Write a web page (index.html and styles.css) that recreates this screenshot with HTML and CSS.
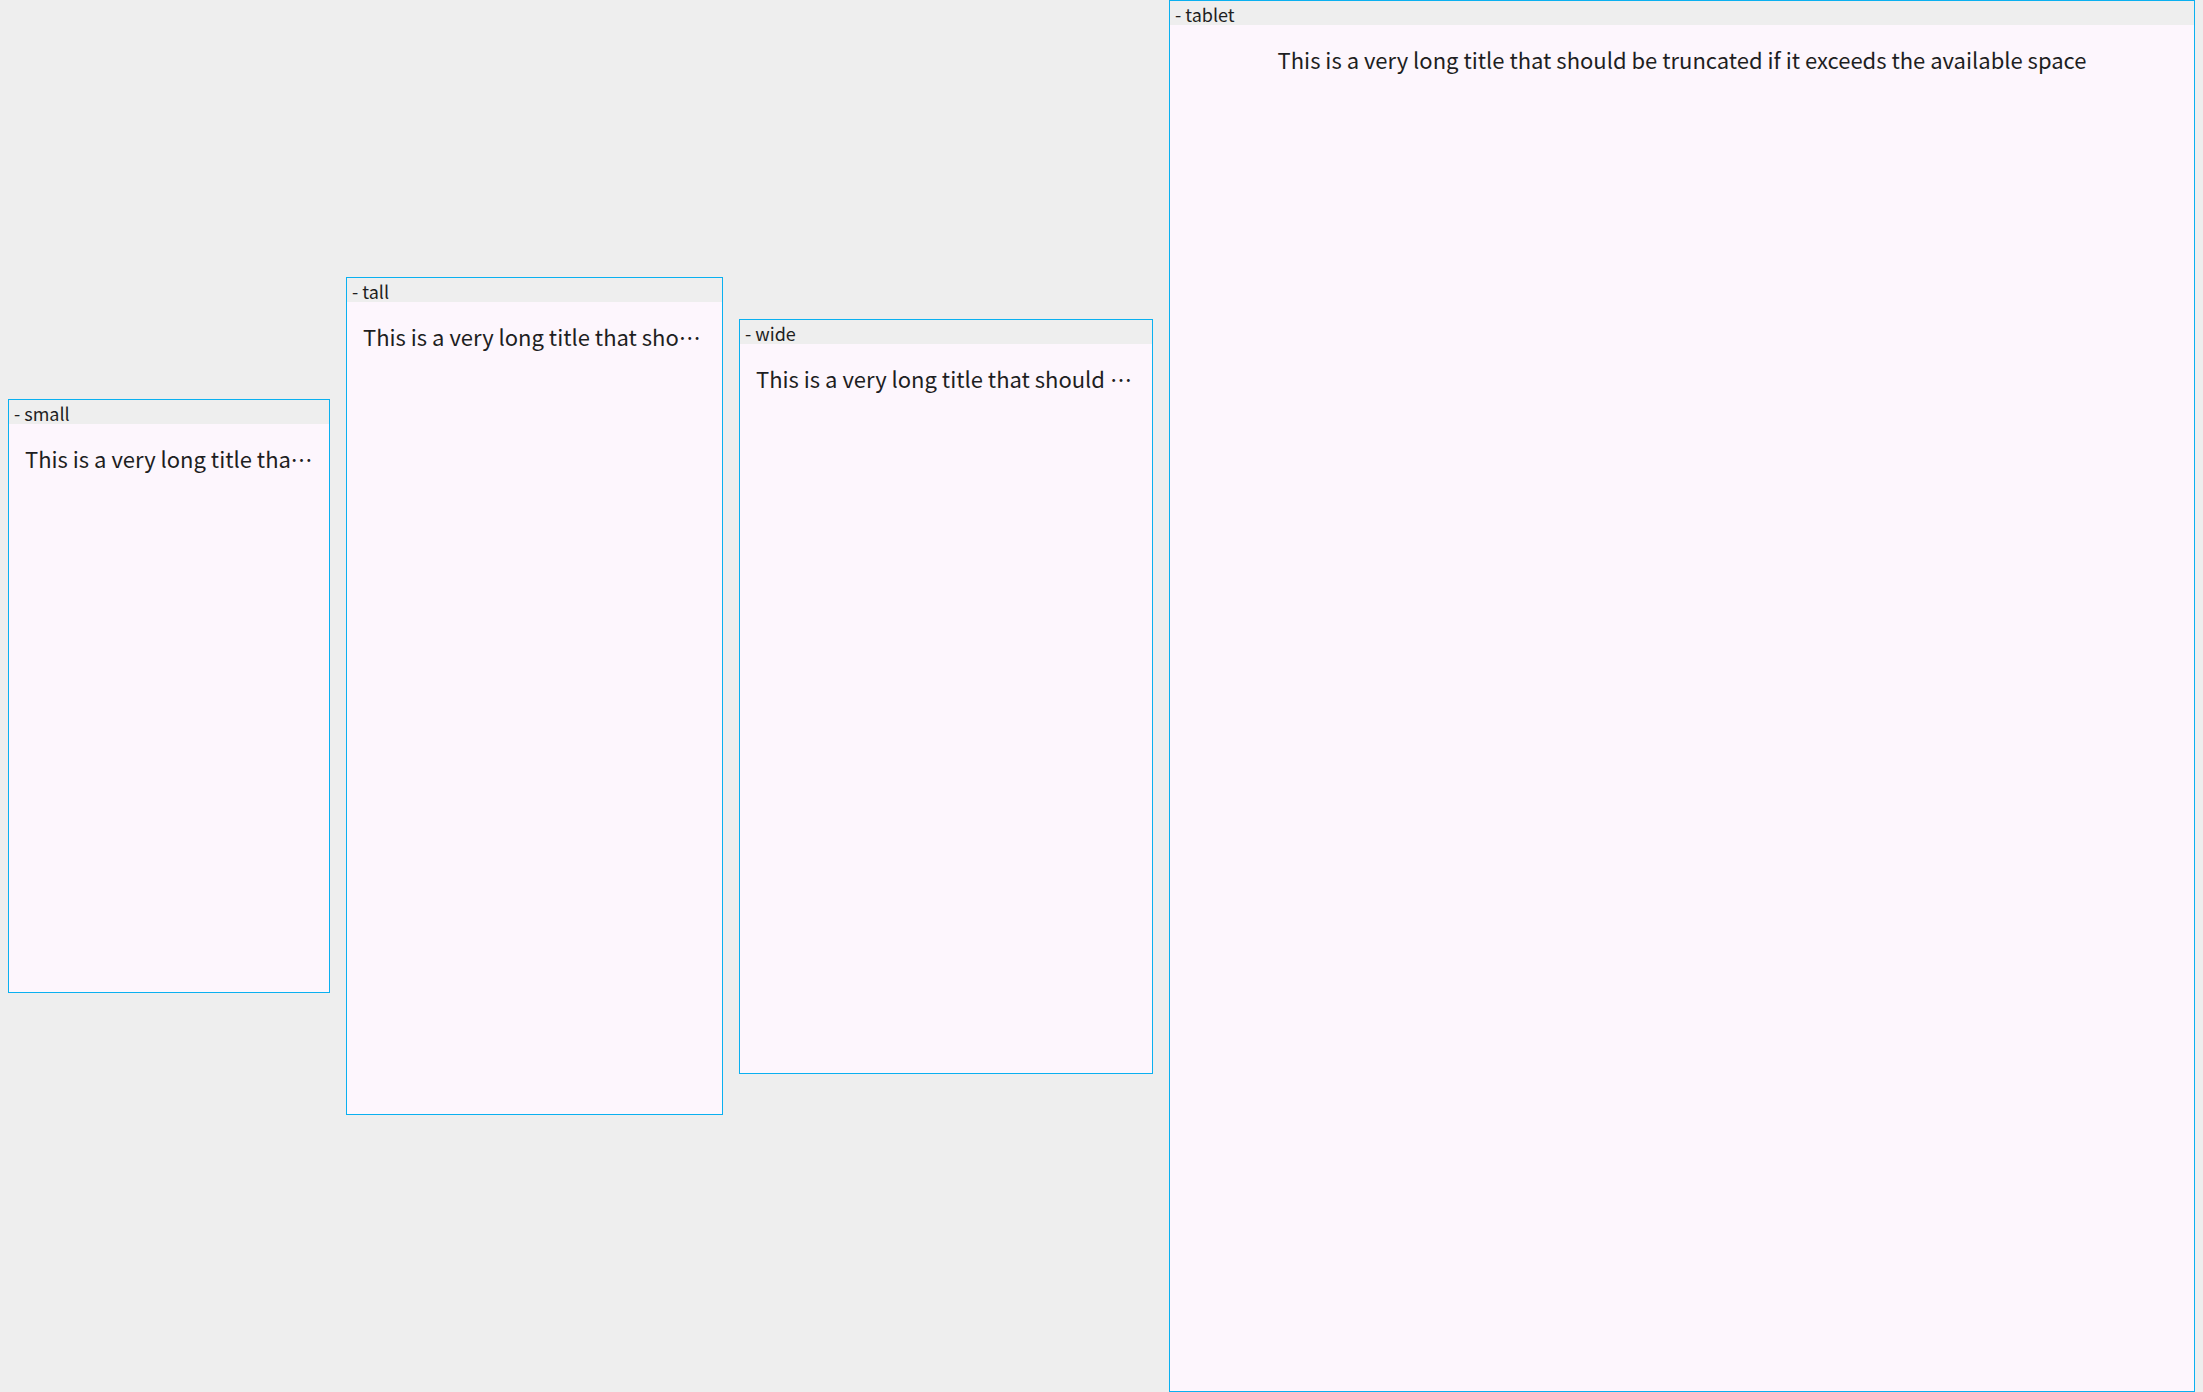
FILE: index.html
```html
<!DOCTYPE html>
<html>
<head>
<meta charset="utf-8">
<link rel="stylesheet" href="styles.css">
</head>
<body>
<div class="stage">
  <div class="device">
    <div class="label">- small</div>
    <div class="screen small"><div class="title">This is a very long title that should be truncated if it exceeds the available space</div></div>
  </div>
  <div class="device">
    <div class="label">- tall</div>
    <div class="screen tall"><div class="title">This is a very long title that should be truncated if it exceeds the available space</div></div>
  </div>
  <div class="device">
    <div class="label">- wide</div>
    <div class="screen wide"><div class="title">This is a very long title that should be truncated if it exceeds the available space</div></div>
  </div>
  <div class="device">
    <div class="label">- tablet</div>
    <div class="screen tablet"><div class="title">This is a very long title that should be truncated if it exceeds the available space</div></div>
  </div>
</div>
</body>
</html>
```
FILE: styles.css
```css
html, body {
  margin: 0;
  padding: 0;
  background: #eeeeee;
  height: 100%;
  overflow: hidden;
}
.stage {
  display: flex;
  align-items: center;
  gap: 16px;
  height: 1392px;
  padding-left: 8px;
  font-family: "Noto Sans CJK JP", "Noto Sans", sans-serif;
  color: #1e1e22;
}
.device {
  flex: none;
  border: 1px solid #0ab0f0;
  background: #fdf6fd;
  display: flex;
  flex-direction: column;
}
.label {
  height: 24px;
  background: #eeeeee;
  font-size: 18px;
  padding-left: 5px;
  overflow: hidden;
  white-space: nowrap;
}
.screen {
  box-sizing: border-box;
  padding: 18px 16px;
}
.small { width: 320px; height: 568px; }
.tall { width: 375px; height: 812px; }
.wide { width: 412px; height: 729px; }
.tablet { width: 1024px; height: 1366px; }
.title {
  font-size: 22px;
  text-align: center;
  white-space: nowrap;
  overflow: hidden;
  text-overflow: ellipsis;
}
```
